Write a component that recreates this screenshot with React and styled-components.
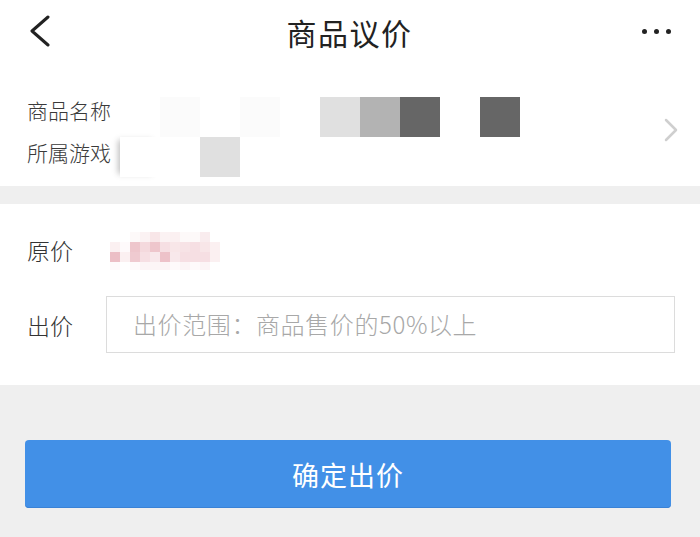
import React from "react";
import styled, { createGlobalStyle } from "styled-components";

const Global = createGlobalStyle`
  html, body { margin: 0; padding: 0; background: #efefef; }
  body { font-family: "Noto Sans CJK SC", "Noto Sans", sans-serif; }
`;

const Page = styled.div`
  width: 700px;
  min-height: 537px;
  background: #efefef;
  display: flex;
  flex-direction: column;
`;

const Header = styled.header`
  height: 64px;
  background: #fff;
  display: grid;
  grid-template-columns: 1fr auto 1fr;
  align-items: center;
  padding: 0 29px 0 28px;
`;

const Title = styled.h1`
  margin: 0;
  font-size: 30px;
  font-weight: 400;
  color: #222;
  line-height: 1;
  letter-spacing: 1.5px;
`;

const HeaderRight = styled.div`
  display: flex;
  justify-content: flex-end;
  gap: 7px;
  margin-top: -2px;
`;

const Dot = styled.span`
  width: 5px;
  height: 5px;
  border-radius: 50%;
  background: #222;
`;

const InfoCard = styled.section`
  background: #fff;
  display: flex;
  padding: 33px 22px 9px 27px;
  margin-bottom: 18px;
`;

const InfoLabels = styled.div`
  width: 93px;
  margin-top: -8px;
  display: flex;
  flex-direction: column;
  font-size: 21px;
  font-weight: 300;
  line-height: 42px;
  color: #3a3a3a;
`;

const Redactions = styled.div`
  flex: 1;
  display: grid;
  grid-template-columns: repeat(10, 40px);
  grid-template-rows: repeat(2, 40px);
`;

const Block = styled.div`
  background: ${(p) => p.$c || "transparent"};
  box-shadow: ${(p) => (p.$shade ? "-5px 0 6px -3px rgba(0,0,0,0.25)" : "none")};
`;

const RightArrow = styled.div`
  align-self: center;
  margin-bottom: 14px;
  display: flex;
`;

const FormCard = styled.section`
  background: #fff;
  padding: 0 25px 32px 27px;
  display: flex;
  flex-direction: column;
`;

const FormRow = styled.div`
  display: flex;
  align-items: center;
  height: ${(p) => p.$h}px;
`;

const FormLabel = styled.div`
  width: 79px;
  font-size: 23px;
  font-weight: 300;
  color: #333;
`;

const Mosaic = styled.div`
  margin-left: 4px;
  margin-top: 2px;
  display: grid;
  grid-template-columns: repeat(11, 10px);
  grid-template-rows: 10px 10px 10px 8px;
`;

const Pix = styled.div`
  background: rgba(218, 128, 142, ${(p) => p.$a});
`;

const Input = styled.input`
  flex: 1;
  height: 57px;
  box-sizing: border-box;
  border: 1.5px solid #dcdcdc;
  padding: 0 0 2px 26px;
  font-family: "Noto Sans CJK SC", "Noto Sans", sans-serif;
  font-size: 24px;
  font-weight: 300;
  letter-spacing: 0.6px;
  color: #333;
  outline: none;
  &::placeholder { color: #a8a8a8; }
`;

const Button = styled.button`
  margin: 55px 29px 0 25px;
  height: 68px;
  border: none;
  border-radius: 4px;
  background: #4290e7;
  box-shadow: inset 0 -1px 0 #3a82d6;
  color: #fff;
  font-family: "Noto Sans CJK SC", "Noto Sans", sans-serif;
  font-size: 27px;
  letter-spacing: 1px;
`;

const mosaic = [
  [0, 0, 0.05, 0.1, 0.2, 0.1, 0.12, 0.05, 0.05, 0.15, 0],
  [0.12, 0.04, 0.45, 0.3, 0.45, 0.25, 0.2, 0.22, 0.25, 0.2, 0.12],
  [0.5, 0.12, 0.42, 0.25, 0.18, 0.48, 0.18, 0.25, 0.25, 0.25, 0.12],
  [0.04, 0, 0.04, 0.08, 0.08, 0.08, 0.04, 0.08, 0.04, 0.08, 0],
];

const redactRows = [
  [null, "#fbfbfb", null, "#fbfbfb", null, "#e0e0e0", "#b3b3b3", "#666", null, "#666"],
  ["shade", "#fff", "#e0e0e0", null, null, null, null, null, null, null],
];

export default function App() {
  return (
    <Page>
      <Global />
      <Header>
        <svg width="24" height="34" viewBox="0 0 24 34">
          <polyline points="20,2 4,16 20,30" fill="none" stroke="#222" strokeWidth="3" strokeLinecap="round" strokeLinejoin="round" />
        </svg>
        <Title>商品议价</Title>
        <HeaderRight>
          <Dot />
          <Dot />
          <Dot />
        </HeaderRight>
      </Header>

      <InfoCard>
        <InfoLabels>
          <span>商品名称</span>
          <span>所属游戏</span>
        </InfoLabels>
        <Redactions>
          {redactRows.flatMap((row, r) =>
            row.map((c, i) => (
              <Block key={`${r}-${i}`} $c={c === "shade" ? "#fff" : c} $shade={c === "shade"} />
            ))
          )}
        </Redactions>
        <RightArrow>
          <svg width="14" height="24" viewBox="0 0 14 24">
            <polyline points="2,2 12,12 2,22" fill="none" stroke="#cfcfcf" strokeWidth="2.5" strokeLinecap="round" strokeLinejoin="round" />
          </svg>
        </RightArrow>
      </InfoCard>

      <FormCard>
        <FormRow $h={92}>
          <FormLabel>原价</FormLabel>
          <Mosaic>
            {mosaic.flatMap((row, r) => row.map((a, i) => <Pix key={`${r}-${i}`} $a={a} />))}
          </Mosaic>
        </FormRow>
        <FormRow $h={57}>
          <FormLabel>出价</FormLabel>
          <Input placeholder="出价范围：商品售价的50%以上" />
        </FormRow>
      </FormCard>

      <Button>确定出价</Button>
    </Page>
  );
}
